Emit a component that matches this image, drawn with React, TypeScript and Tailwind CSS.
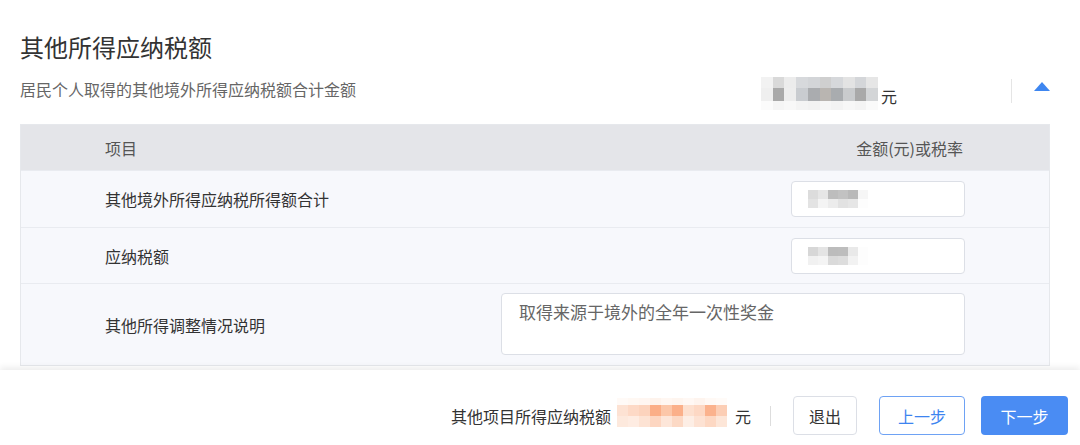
import React from 'react';

const font = { fontFamily: '"Noto Sans CJK SC", "Noto Sans", sans-serif' };

// mosaic blur used to hide the amounts
function Mosaic({ rows, className }: { rows: { h: string; colors: string[] }[]; className: string }) {
  return (
    <div className={`flex flex-col ${className}`}>
      {rows.map((r, i) => (
        <div key={i} className={`flex ${r.h}`}>
          {r.colors.map((c, j) => (
            <div key={j} className="flex-1" style={{ backgroundColor: c }} />
          ))}
        </div>
      ))}
    </div>
  );
}

const topValue = [
  { h: 'h-[11px]', colors: ['#f2f2f2', '#d9d9d9', '#ececec', '#d7d9dc', '#d3d5d8', '#cfcfcf', '#d6d8db', '#e3e3e3', '#d4d6d9', '#e6e6e6'] },
  { h: 'h-[13px]', colors: ['#efefef', '#a9a9a9', '#ededed', '#c9ccd0', '#aaacaf', '#b9b5b1', '#a9acaf', '#c9cbcd', '#a9a9a9', '#d3d5d7'] },
  { h: 'h-[9px]', colors: ['#fbfbfb', '#f5f5f5', '#f8f8f8', '#f4f4f4', '#f2f2f2', '#f6f6f6', '#f3f3f3', '#f7f7f7', '#f4f4f4', '#fafafa'] },
];

const input1 = [
  { h: 'h-[9px]', colors: ['#dcdcdc', '#e6e6e6', '#bdbdbd', '#c2c2c2', '#b9b9b9', '#f6f6f6'] },
  { h: 'h-[9px]', colors: ['#e3e3e3', '#f4f4f4', '#ececec', '#e2e2e2', '#e6e6e6', '#fdfdfd'] },
];

const input2 = [
  { h: 'h-[9px]', colors: ['#d7d7d7', '#e4e4e4', '#bcbcbc', '#bdbdbd', '#e9e9e9', '#fdfdfd'] },
  { h: 'h-[9px]', colors: ['#f1f1f1', '#f4f4f4', '#dadada', '#dddddd', '#f2f2f2', '#fdfdfd'] },
];

const footerValue = [
  { h: 'h-[7px]', colors: ['#fffaf7', '#fff8f3', '#fff6f1', '#fef3ec', '#fff7f2', '#fef5ef', '#fff8f4', '#fef4ee', '#fff9f5', '#fffbf8'] },
  { h: 'h-[11px]', colors: ['#fde2d3', '#fdd9c6', '#fcd3bd', '#fbae87', '#fcc7a9', '#fbb08a', '#fde0cf', '#fdd8c4', '#fbb28d', '#fcceb5'] },
  { h: 'h-[11px]', colors: ['#fde9dd', '#feece2', '#fde3d4', '#fdd6c1', '#fde6d9', '#fcd9c5', '#fdeee5', '#fde2d3', '#fdd8c3', '#fde6d8'] },
];

function Row({ label, children, h }: { label: string; children: React.ReactNode; h: string }) {
  return (
    <div className={`flex items-center justify-between border-t border-[#e9ebf0] bg-[#f7f8fc] pl-[84px] pr-[84px] ${h}`}>
      <span className="text-[16px] text-[#333]">{label}</span>
      {children}
    </div>
  );
}

export default function App() {
  return (
    <div className="flex h-[445px] w-[1080px] flex-col overflow-hidden bg-white" style={font}>
      <div className="flex-1 px-5 pt-[31px]">
        <h1 className="text-[24px] leading-[32px] text-[#333]">其他所得应纳税额</h1>

        <div className="mt-[12px] flex h-[28px] w-[1030px] items-center justify-between">
          <span className="text-[16px] text-[#666]">居民个人取得的其他境外所得应纳税额合计金额</span>
          <div className="flex h-full items-center">
            <Mosaic rows={topValue} className="mt-[8px] w-[117px]" />
            <span className="ml-[3px] mt-[14px] text-[16px] text-[#333]">元</span>
            <div className="ml-[114px] mt-[3px] h-[24px] w-px bg-[#e5e5e5]" />
            <svg width="16" height="9" viewBox="0 0 16 9" className="ml-[22px] mt-[-6px]">
              <path d="M8 0 L16 9 L0 9 Z" fill="#3e86f0" />
            </svg>
          </div>
        </div>

        <div className="mt-[21px] w-[1030px] border border-[#e6e8ec]">
          <div className="flex h-[45px] items-center justify-between bg-[#e4e5e9] pl-[84px] pr-[86px] text-[16px] text-[#555]">
            <span>项目</span>
            <span>金额(元)或税率</span>
          </div>
          <Row label="其他境外所得应纳税所得额合计" h="h-[57px]">
            <div className="flex h-[36px] w-[174px] items-center rounded border border-[#dcdfe6] bg-white pl-[16px]">
              <Mosaic rows={input1} className="w-[60px]" />
            </div>
          </Row>
          <Row label="应纳税额" h="h-[56px]">
            <div className="flex h-[36px] w-[174px] items-center rounded border border-[#dcdfe6] bg-white pl-[16px]">
              <Mosaic rows={input2} className="w-[60px]" />
            </div>
          </Row>
          <Row label="其他所得调整情况说明" h="h-[82px]">
            <div className="mb-[2px] h-[62px] w-[464px] rounded border border-[#dcdfe6] bg-white px-[17px] pt-[6px] text-[17px] leading-[24px] text-[#666]">
              取得来源于境外的全年一次性奖金
            </div>
          </Row>
        </div>
      </div>

      <div className="relative flex h-[75px] shrink-0 items-start justify-end bg-white pr-3 pt-[26px] shadow-[0_-3px_6px_rgba(0,0,0,0.07)]">
        <div className="flex h-[39px] items-center">
          <span className="text-[16px] text-[#333]">其他项目所得应纳税额</span>
          <Mosaic rows={footerValue} className="ml-[6px] mt-[-6px] w-[110px]" />
          <span className="ml-[8px] text-[16px] text-[#333]">元</span>
          <div className="ml-[19px] h-[20px] w-px bg-[#dddddd]" />
          <button className="ml-[22px] h-[39px] w-[64px] rounded border border-[#dcdfe6] bg-white text-[16px] text-[#333]">退出</button>
          <button className="ml-[22px] h-[39px] w-[86px] rounded border border-[#6ea2f4] bg-white text-[16px] text-[#3d84f0]">上一步</button>
          <button className="ml-[16px] h-[39px] w-[87px] rounded bg-[#4a8cf3] text-[16px] text-white">下一步</button>
        </div>
      </div>
    </div>
  );
}
